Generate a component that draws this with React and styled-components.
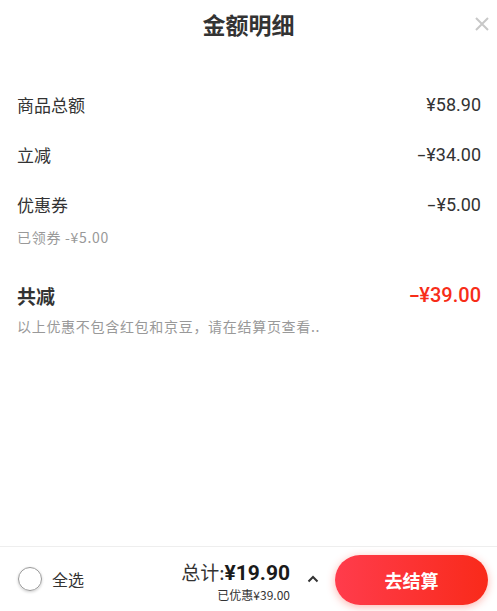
import React from "react";
import styled, { createGlobalStyle } from "styled-components";

const GlobalStyle = createGlobalStyle`
  html, body {
    margin: 0;
    padding: 0;
    background: #fff;
  }
  body {
    font-family: "Noto Sans CJK SC", "Noto Sans", Roboto, sans-serif;
    color: #333;
  }
`;

const Page = styled.div`
  width: 497px;
  height: 611px;
  display: flex;
  flex-direction: column;
  position: relative;
  overflow: hidden;
`;

const Header = styled.div`
  height: 48px;
  box-sizing: border-box;
  padding-top: 9px;
  display: flex;
  justify-content: center;
  position: relative;
`;

const Title = styled.h1`
  margin: 0;
  font-size: 23px;
  line-height: 30px;
  font-weight: 700;
  color: #333;
`;

const Close = styled.button`
  position: absolute;
  right: 5px;
  top: 14px;
  width: 20px;
  height: 20px;
  padding: 0;
  border: none;
  background: none;
  display: flex;
  align-items: center;
  justify-content: center;
`;

const Content = styled.div`
  flex: 1;
  padding: 31px 16px 0 17px;
`;

const Row = styled.div`
  display: flex;
  align-items: center;
  justify-content: space-between;
  height: ${(p) => (p.total ? "40px" : "50px")};
  margin-top: ${(p) => (p.total ? "30px" : "0")};
`;

const Label = styled.span`
  font-size: ${(p) => (p.total ? "19px" : "17px")};
  font-weight: ${(p) => (p.total ? 700 : 400)};
  color: #333;
`;

const Amount = styled.span`
  font-family: Roboto, "Noto Sans", sans-serif;
  font-size: ${(p) => (p.total ? "20px" : "18px")};
  font-weight: ${(p) => (p.total ? 500 : 400)};
  color: ${(p) => (p.red ? "#f72d18" : "#333")};
`;

const Minus = styled.span`
  display: inline-block;
  transform: scaleX(1.6);
  margin: 0 2px 0 2px;
`;

const Sub = styled.div`
  font-size: 14px;
  letter-spacing: 0.7px;
  line-height: 16px;
  color: #999;
  margin-top: ${(p) => p.gap || 0}px;
`;

const Footer = styled.div`
  height: 64px;
  border-top: 1px solid #eee;
  display: flex;
  align-items: center;
  padding: 0 9px 0 18px;
`;

const Check = styled.span`
  width: 22px;
  height: 22px;
  border-radius: 50%;
  border: 1.5px solid #999;
  box-shadow: 0 1px 3px rgba(0, 0, 0, 0.2);
  box-sizing: content-box;
`;

const CheckLabel = styled.span`
  margin-left: 10px;
  font-size: 16px;
  color: #333;
`;

const Spacer = styled.div`
  flex: 1;
`;

const TotalBox = styled.div`
  display: flex;
  flex-direction: column;
  align-items: flex-end;
  margin-top: 4px;
`;

const TotalLine = styled.div`
  display: flex;
  align-items: baseline;
  line-height: 22px;
`;

const TotalLabel = styled.span`
  font-size: 19px;
  color: #333;
`;

const TotalPrice = styled.span`
  font-family: Roboto, "Noto Sans", sans-serif;
  font-size: 21px;
  font-weight: 700;
  color: #1a1a1a;
`;

const Saved = styled.div`
  font-size: 12px;
  color: #333;
  margin-top: 4px;
  line-height: 14px;
`;

const Chevron = styled.span`
  margin: 0 16px 0 17px;
  display: flex;
  align-items: center;
`;

const Pay = styled.button`
  width: 153px;
  height: 50px;
  border: none;
  border-radius: 25px;
  background: linear-gradient(90deg, #ff3c4c 0%, #f92a1a 100%);
  box-shadow: 0 2px 8px rgba(250, 44, 25, 0.35);
  color: #fff;
  font-family: "Noto Sans CJK SC", sans-serif;
  font-size: 18px;
  font-weight: 700;
  margin-top: 2px;
`;

export default function App() {
  return (
    <>
      <GlobalStyle />
      <Page>
        <Header>
          <Title>金额明细</Title>
          <Close aria-label="关闭">
            <svg width="16" height="16" viewBox="0 0 16 16">
              <path d="M2 2 L14 14 M14 2 L2 14" stroke="#c8c8c8" strokeWidth="2" />
            </svg>
          </Close>
        </Header>
        <Content>
          <Row>
            <Label>商品总额</Label>
            <Amount>¥58.90</Amount>
          </Row>
          <Row>
            <Label>立减</Label>
            <Amount><Minus>-</Minus>¥34.00</Amount>
          </Row>
          <Row>
            <Label>优惠券</Label>
            <Amount><Minus>-</Minus>¥5.00</Amount>
          </Row>
          <Sub>已领券 -¥5.00</Sub>
          <Row total>
            <Label total>共减</Label>
            <Amount total red><Minus>-</Minus>¥39.00</Amount>
          </Row>
          <Sub gap={3}>以上优惠不包含红包和京豆，请在结算页查看..</Sub>
        </Content>
        <Footer>
          <Check />
          <CheckLabel>全选</CheckLabel>
          <Spacer />
          <TotalBox>
            <TotalLine>
              <TotalLabel>总计:</TotalLabel>
              <TotalPrice>¥19.90</TotalPrice>
            </TotalLine>
            <Saved>已优惠¥39.00</Saved>
          </TotalBox>
          <Chevron>
            <svg width="12" height="8" viewBox="0 0 12 8">
              <path d="M1.5 6.5 L6 2 L10.5 6.5" fill="none" stroke="#333" strokeWidth="2" />
            </svg>
          </Chevron>
          <Pay>去结算</Pay>
        </Footer>
      </Page>
    </>
  );
}
